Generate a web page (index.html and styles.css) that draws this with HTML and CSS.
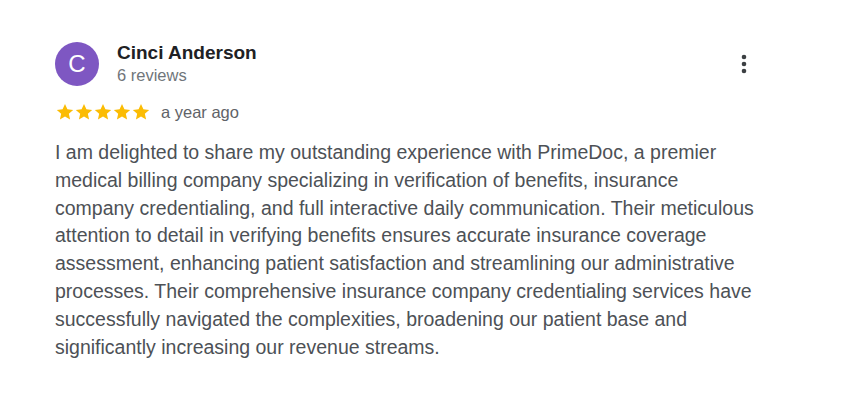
FILE: index.html
```html
<!DOCTYPE html>
<html>
<head>
<meta charset="utf-8">
<link rel="stylesheet" href="styles.css">
</head>
<body>
<div class="review">
  <div class="header">
    <div class="avatar">C</div>
    <div class="who">
      <div class="name">Cinci Anderson</div>
      <div class="count">6 reviews</div>
    </div>
    <div class="more">
      <svg width="24" height="24" viewBox="0 0 24 24"><circle cx="12" cy="5" r="2.3" fill="#3c4043"/><circle cx="12" cy="12" r="2.3" fill="#3c4043"/><circle cx="12" cy="19" r="2.3" fill="#3c4043"/></svg>
    </div>
  </div>
  <div class="meta">
    <div class="stars">
      <svg viewBox="0 0 24 24" class="star"><path d="M12 2.5l2.9 6.3 6.9.7-5.2 4.6 1.5 6.8L12 17.4l-6.1 3.5 1.5-6.8-5.2-4.6 6.9-.7z"/></svg>
      <svg viewBox="0 0 24 24" class="star"><path d="M12 2.5l2.9 6.3 6.9.7-5.2 4.6 1.5 6.8L12 17.4l-6.1 3.5 1.5-6.8-5.2-4.6 6.9-.7z"/></svg>
      <svg viewBox="0 0 24 24" class="star"><path d="M12 2.5l2.9 6.3 6.9.7-5.2 4.6 1.5 6.8L12 17.4l-6.1 3.5 1.5-6.8-5.2-4.6 6.9-.7z"/></svg>
      <svg viewBox="0 0 24 24" class="star"><path d="M12 2.5l2.9 6.3 6.9.7-5.2 4.6 1.5 6.8L12 17.4l-6.1 3.5 1.5-6.8-5.2-4.6 6.9-.7z"/></svg>
      <svg viewBox="0 0 24 24" class="star"><path d="M12 2.5l2.9 6.3 6.9.7-5.2 4.6 1.5 6.8L12 17.4l-6.1 3.5 1.5-6.8-5.2-4.6 6.9-.7z"/></svg>
    </div>
    <span class="ago">a year ago</span>
  </div>
  <p class="text">I am delighted to share my outstanding experience with PrimeDoc, a premier medical billing company specializing in verification of benefits, insurance company credentialing, and full interactive daily communication. Their meticulous attention to detail in verifying benefits ensures accurate insurance coverage assessment, enhancing patient satisfaction and streamlining our administrative processes. Their comprehensive insurance company credentialing services have successfully navigated the complexities, broadening our patient base and significantly increasing our revenue streams.</p>
</div>
</body>
</html>
```
FILE: styles.css
```css
html, body {
  margin: 0;
  background: #fff;
}
body {
  font-family: "Liberation Sans", Arial, sans-serif;
}
.review {
  padding: 42px 0 0 55px;
  width: 702px;
}
.header {
  display: flex;
  align-items: flex-start;
}
.avatar {
  width: 44px;
  height: 44px;
  border-radius: 50%;
  background: #7e57c2;
  color: #fff;
  font-size: 24px;
  display: flex;
  align-items: center;
  justify-content: center;
  flex: none;
}
.who {
  margin-left: 18px;
  flex: 1;
}
.name {
  font-size: 19px;
  font-weight: bold;
  color: #202124;
  line-height: 21px;
}
.count {
  font-size: 16.5px;
  color: #70757a;
  line-height: 20px;
  margin-top: 2px;
}
.more {
  margin-top: 10px;
  margin-right: 1px;
}
.meta {
  display: flex;
  align-items: center;
  margin-top: 16px;
}
.stars {
  display: flex;
}
.star {
  width: 20px;
  height: 20px;
  fill: #fbbc04;
  margin-right: -1px;
}
.ago {
  margin-left: 11px;
  font-size: 16.5px;
  color: #5f6368;
}
.text {
  margin: 17px 0 0;
  font-size: 19.5px;
  line-height: 27.8px;
  color: #4d5156;
}
```
